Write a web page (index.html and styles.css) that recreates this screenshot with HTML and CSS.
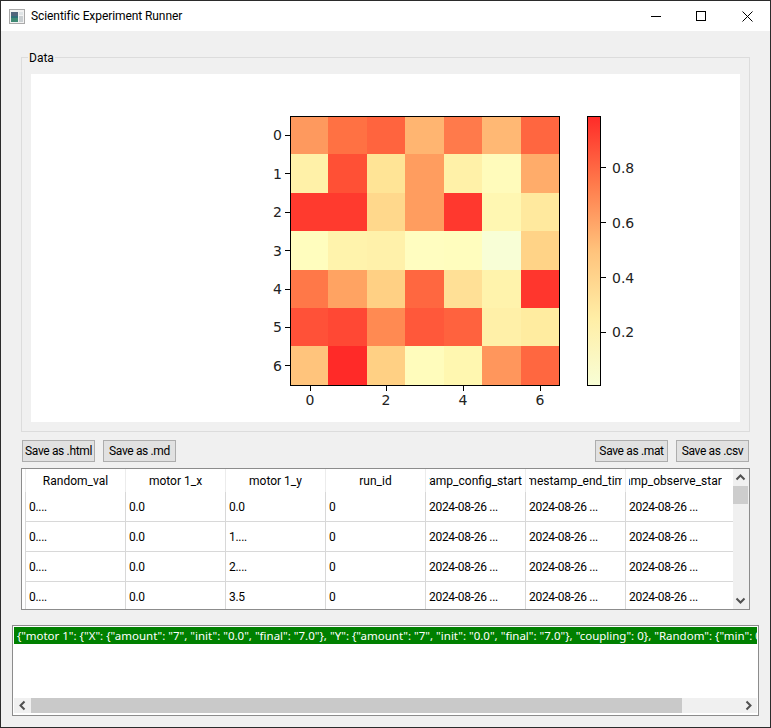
FILE: index.html
```html
<!DOCTYPE html>
<html lang="en">
<head>
    <meta charset="UTF-8">
    <meta name="viewport" content="width=device-width, initial-scale=1.0">
    <title>Scientific Experiment Runner</title>
    <link rel="stylesheet" href="styles.css">
</head>
<body>
    <div class="window">
        <header class="titlebar">
            <svg class="app-icon" width="16" height="15" viewBox="0 0 16 15">
                <rect x="0.5" y="0.5" width="15" height="14" fill="#f2f2f2" stroke="#a9a9a9"/>
                <rect x="2" y="3" width="7" height="10" fill="#2f6f7a"/>
                <rect x="2" y="3" width="7" height="4" fill="#51657c"/>
                <rect x="2" y="9" width="7" height="4" fill="#3f8a74"/>
                <rect x="10" y="3" width="4" height="3" fill="#dfe4e6"/>
                <rect x="10" y="7" width="4" height="6" fill="#c9ced1"/>
            </svg>
            <span class="title">Scientific Experiment Runner</span>
            <div class="controls">
                <svg width="10" height="10" viewBox="0 0 10 10"><path d="M0 5.5H10" stroke="#000"/></svg>
                <svg width="10" height="10" viewBox="0 0 10 10"><rect x="0.5" y="0.5" width="9" height="9" fill="none" stroke="#000"/></svg>
                <svg class="close" width="11" height="11" viewBox="0 0 11 11"><path d="M0.5 0.5L10.5 10.5M10.5 0.5L0.5 10.5" stroke="#000"/></svg>
            </div>
        </header>

        <main class="content">
            <div class="upper">
                <fieldset class="group">
                    <legend>Data</legend>
                    <div class="plot">
                        <svg class="heatmap" width="709" height="348" viewBox="31 74 709 348">
                            <defs>
                                <linearGradient id="cbar" x1="0" y1="0" x2="0" y2="1">
                                    <stop offset="0" stop-color="#ff2a28"/>
                                    <stop offset="0.25" stop-color="#ff7a4b"/>
                                    <stop offset="0.5" stop-color="#ffc37c"/>
                                    <stop offset="0.75" stop-color="#ffeea6"/>
                                    <stop offset="1" stop-color="#f8fed6"/>
                                </linearGradient>
                            </defs>
                            <g class="cells">
                                <rect x="291" y="116" width="37" height="38" fill="#fe995e"/>
                                <rect x="328" y="116" width="39" height="38" fill="#ff7143"/>
                                <rect x="367" y="116" width="38" height="38" fill="#ff643e"/>
                                <rect x="405" y="116" width="39" height="38" fill="#ffb571"/>
                                <rect x="444" y="116" width="38" height="38" fill="#ff7a4b"/>
                                <rect x="482" y="116" width="39" height="38" fill="#ffb874"/>
                                <rect x="521" y="116" width="38" height="38" fill="#ff6640"/>

                                <rect x="291" y="154" width="37" height="39" fill="#fff1a8"/>
                                <rect x="328" y="154" width="39" height="39" fill="#ff5035"/>
                                <rect x="367" y="154" width="38" height="39" fill="#ffe496"/>
                                <rect x="405" y="154" width="39" height="39" fill="#ff9d5f"/>
                                <rect x="444" y="154" width="38" height="39" fill="#fff1a8"/>
                                <rect x="482" y="154" width="39" height="39" fill="#fffbbb"/>
                                <rect x="521" y="154" width="38" height="39" fill="#ffac6a"/>

                                <rect x="291" y="193" width="37" height="38" fill="#ff3a2e"/>
                                <rect x="328" y="193" width="39" height="38" fill="#ff3a2e"/>
                                <rect x="367" y="193" width="38" height="38" fill="#ffd88c"/>
                                <rect x="405" y="193" width="39" height="38" fill="#ff9d5f"/>
                                <rect x="444" y="193" width="38" height="38" fill="#ff382e"/>
                                <rect x="482" y="193" width="39" height="38" fill="#fff7b2"/>
                                <rect x="521" y="193" width="38" height="38" fill="#ffe99e"/>

                                <rect x="291" y="231" width="37" height="39" fill="#fffdbe"/>
                                <rect x="328" y="231" width="39" height="39" fill="#fff3ac"/>
                                <rect x="367" y="231" width="38" height="39" fill="#fff1aa"/>
                                <rect x="405" y="231" width="39" height="39" fill="#fffdc0"/>
                                <rect x="444" y="231" width="38" height="39" fill="#fffdbe"/>
                                <rect x="482" y="231" width="39" height="39" fill="#f8fed6"/>
                                <rect x="521" y="231" width="38" height="39" fill="#ffd387"/>

                                <rect x="291" y="270" width="37" height="38" fill="#ff7848"/>
                                <rect x="328" y="270" width="39" height="38" fill="#ffa362"/>
                                <rect x="367" y="270" width="38" height="38" fill="#ffd084"/>
                                <rect x="405" y="270" width="39" height="38" fill="#ff6740"/>
                                <rect x="444" y="270" width="38" height="38" fill="#ffe096"/>
                                <rect x="482" y="270" width="39" height="38" fill="#fff3ac"/>
                                <rect x="521" y="270" width="38" height="38" fill="#ff362d"/>

                                <rect x="291" y="308" width="37" height="38" fill="#ff5138"/>
                                <rect x="328" y="308" width="39" height="38" fill="#ff4834"/>
                                <rect x="367" y="308" width="38" height="38" fill="#ff8a52"/>
                                <rect x="405" y="308" width="39" height="38" fill="#ff583a"/>
                                <rect x="444" y="308" width="38" height="38" fill="#ff623e"/>
                                <rect x="482" y="308" width="39" height="38" fill="#fff0a8"/>
                                <rect x="521" y="308" width="38" height="38" fill="#ffeca0"/>

                                <rect x="291" y="346" width="37" height="39" fill="#ffc47c"/>
                                <rect x="328" y="346" width="39" height="39" fill="#ff2a28"/>
                                <rect x="367" y="346" width="38" height="39" fill="#ffd084"/>
                                <rect x="405" y="346" width="39" height="39" fill="#fffcbc"/>
                                <rect x="444" y="346" width="38" height="39" fill="#fff7b0"/>
                                <rect x="482" y="346" width="39" height="39" fill="#ff965c"/>
                                <rect x="521" y="346" width="38" height="39" fill="#ff6740"/>
                            </g>
                            <rect class="frame" x="290.5" y="116.5" width="269" height="269"/>
                            <path class="ticks" d="M285 135.5H290M285 173.5H290M285 212.5H290M285 250.5H290M285 289.5H290M285 327.5H290M285 365.5H290M310.5 386V391M386.5 386V391M463.5 386V391M540.5 386V391"/>
                            <g class="labels">
                                <text x="282" y="140" text-anchor="end">0</text>
                                <text x="282" y="179" text-anchor="end">1</text>
                                <text x="282" y="217" text-anchor="end">2</text>
                                <text x="282" y="256" text-anchor="end">3</text>
                                <text x="282" y="294" text-anchor="end">4</text>
                                <text x="282" y="332" text-anchor="end">5</text>
                                <text x="282" y="371" text-anchor="end">6</text>
                                <text x="310" y="405" text-anchor="middle">0</text>
                                <text x="386" y="405" text-anchor="middle">2</text>
                                <text x="463" y="405" text-anchor="middle">4</text>
                                <text x="540" y="405" text-anchor="middle">6</text>
                            </g>
                            <rect x="587" y="116" width="14" height="270" fill="url(#cbar)"/>
                            <rect class="frame" x="587.5" y="116.5" width="13" height="269"/>
                            <path class="ticks" d="M601 167.5H606M601 222.5H606M601 277.5H606M601 332.5H606"/>
                            <g class="labels">
                                <text x="612" y="173">0.8</text>
                                <text x="612" y="228">0.6</text>
                                <text x="612" y="283">0.4</text>
                                <text x="612" y="337">0.2</text>
                            </g>
                        </svg>
                    </div>
                </fieldset>

                <div class="toolbar">
                    <button type="button">Save as .html</button>
                    <button type="button">Save as .md</button>
                    <button type="button" class="push-right">Save as .mat</button>
                    <button type="button">Save as .csv</button>
                </div>

                <div class="table-box">
                    <div class="table">
                        <div class="row head">
                            <div class="cell"><span>Random_val</span></div>
                            <div class="cell"><span>motor 1_x</span></div>
                            <div class="cell"><span>motor 1_y</span></div>
                            <div class="cell"><span>run_id</span></div>
                            <div class="cell cut-left"><span>timestamp_config_start</span></div>
                            <div class="cell"><span>timestamp_end_time</span></div>
                            <div class="cell cut-left"><span><b class="nudge">timestamp_observe_start</b></span></div>
                        </div>
                        <div class="row">
                            <div class="cell">0....</div><div class="cell">0.0</div><div class="cell">0.0</div><div class="cell">0</div>
                            <div class="cell">2024-08-26 ...</div><div class="cell">2024-08-26 ...</div><div class="cell">2024-08-26 ...</div>
                        </div>
                        <div class="row">
                            <div class="cell">0....</div><div class="cell">0.0</div><div class="cell">1....</div><div class="cell">0</div>
                            <div class="cell">2024-08-26 ...</div><div class="cell">2024-08-26 ...</div><div class="cell">2024-08-26 ...</div>
                        </div>
                        <div class="row">
                            <div class="cell">0....</div><div class="cell">0.0</div><div class="cell">2....</div><div class="cell">0</div>
                            <div class="cell">2024-08-26 ...</div><div class="cell">2024-08-26 ...</div><div class="cell">2024-08-26 ...</div>
                        </div>
                        <div class="row">
                            <div class="cell">0....</div><div class="cell">0.0</div><div class="cell">3.5</div><div class="cell">0</div>
                            <div class="cell">2024-08-26 ...</div><div class="cell">2024-08-26 ...</div><div class="cell">2024-08-26 ...</div>
                        </div>
                    </div>
                    <div class="vscroll">
                        <svg width="15" height="17" viewBox="0 0 15 17"><path d="M3.5 10.5L7.5 6.5L11.5 10.5" fill="none" stroke="#505050" stroke-width="2"/></svg>
                        <div class="vthumb"></div>
                        <svg class="push-down" width="15" height="17" viewBox="0 0 15 17"><path d="M3.5 6.5L7.5 10.5L11.5 6.5" fill="none" stroke="#505050" stroke-width="2"/></svg>
                    </div>
                </div>
            </div>

            <div class="log">
                <div class="log-line">{"motor 1": {"X": {"amount": "7", "init": "0.0", "final": "7.0"}, "Y": {"amount": "7", "init": "0.0", "final": "7.0"}, "coupling": 0}, "Random": {"min": 0.0, "max": 1.0}}</div>
                <div class="hscroll">
                    <svg width="17" height="15" viewBox="0 0 17 15"><path d="M10.5 3.5L6.5 7.5L10.5 11.5" fill="none" stroke="#505050" stroke-width="2"/></svg>
                    <div class="hthumb"></div>
                    <svg class="push-right" width="17" height="15" viewBox="0 0 17 15"><path d="M6.5 3.5L10.5 7.5L6.5 11.5" fill="none" stroke="#505050" stroke-width="2"/></svg>
                </div>
            </div>
        </main>
    </div>
</body>
</html>
```

FILE: styles.css
```css
* {
    box-sizing: border-box;
}

body {
    margin: 0;
    font-family: Roboto, "Noto Sans", sans-serif;
    font-size: 12px;
    color: #000;
}

.window {
    width: 771px;
    height: 728px;
    display: flex;
    flex-direction: column;
    background: #f0f0f0;
    border: 1px solid #2b2b2b;
}

.titlebar {
    height: 30px;
    display: flex;
    align-items: center;
    background: #fff;
    padding-left: 8px;
}

.app-icon {
    margin-right: 6px;
}

.title {
    flex: 1;
    letter-spacing: -0.08px;
}

.controls {
    display: flex;
    align-items: center;
    gap: 35px;
    padding-right: 17px;
}

.controls .close {
    margin-left: 1px;
}

.content {
    flex: 1;
    padding: 19px 11px 0;
    display: flex;
    flex-direction: column;
}

.upper {
    padding: 0 9px;
}

.group {
    margin: 0;
    height: 382px;
    padding: 9px;
    border: 1px solid #dcdcdc;
}

.group legend {
    padding: 1px 1px 0;
    margin-left: -3px;
    font-size: 12px;
    line-height: 14px;
}

.plot {
    background: #fff;
    height: 348px;
}

.heatmap {
    display: block;
}

.cells {
    shape-rendering: crispEdges;
}

.frame {
    fill: none;
    stroke: #000;
}

.ticks {
    fill: none;
    stroke: #000;
}

.labels {
    font-family: "DejaVu Sans", sans-serif;
    font-size: 14px;
    fill: #222;
}

.toolbar {
    display: flex;
    gap: 8px;
    margin-top: 8px;
    padding: 0 1px;
}

.toolbar button {
    width: 73px;
    height: 22px;
    padding: 0;
    font: inherit;
    letter-spacing: -0.35px;
    white-space: nowrap;
    background: #e1e1e1;
    border: 1px solid #adadad;
    border-radius: 0;
}

.toolbar .push-right {
    margin-left: auto;
}

.table-box {
    height: 142px;
    margin-top: 6px;
    display: flex;
    border: 1px solid #8c8c8c;
    background: #fff;
}

.table {
    flex: none;
    width: 711px;
    height: 140px;
    padding-left: 3px;
    overflow: hidden;
}

.row {
    display: flex;
    height: 30px;
    border-bottom: 1px solid #d8d8d8;
}

.row.head {
    height: 23px;
    border-bottom: none;
}

.cell {
    flex: none;
    width: 100px;
    padding: 0 3px;
    display: flex;
    align-items: center;
    border-left: 1px solid #d8d8d8;
    letter-spacing: -0.3px;
    white-space: nowrap;
    overflow: hidden;
}

.head .cell {
    border-left-color: #ececec;
    letter-spacing: 0;
}

/* long column names stay centred and get cut on both sides */
.head .cell span {
    flex: 1;
    display: flex;
    justify-content: center;
    overflow: hidden;
}

.head .cut-left span {
    justify-content: flex-end;
}

.nudge {
    flex: none;
    font-weight: normal;
    margin-right: -4px;
}

.vscroll {
    margin-left: auto;
    width: 16px;
    display: flex;
    flex-direction: column;
    background: #f0f0f0;
}

.vthumb {
    width: 15px;
    height: 18px;
    background: #cdcdcd;
}

.push-down {
    margin-top: auto;
}

.log {
    height: 91px;
    margin-top: 15px;
    display: flex;
    flex-direction: column;
    border: 1px solid #8c8c8c;
    background: #fff;
    padding: 1px 1px 2px;
}

.log-line {
    height: 17px;
    line-height: 17px;
    padding-left: 3px;
    font-family: "Noto Sans", sans-serif;
    font-size: 11.5px;
    background: #008000;
    color: #fff;
    white-space: nowrap;
    overflow: hidden;
}

.hscroll {
    margin-top: auto;
    height: 15px;
    display: flex;
    background: #f0f0f0;
}

.hthumb {
    width: 651px;
    background: #c9c9c9;
}

.hscroll .push-right {
    margin-left: auto;
}
```
